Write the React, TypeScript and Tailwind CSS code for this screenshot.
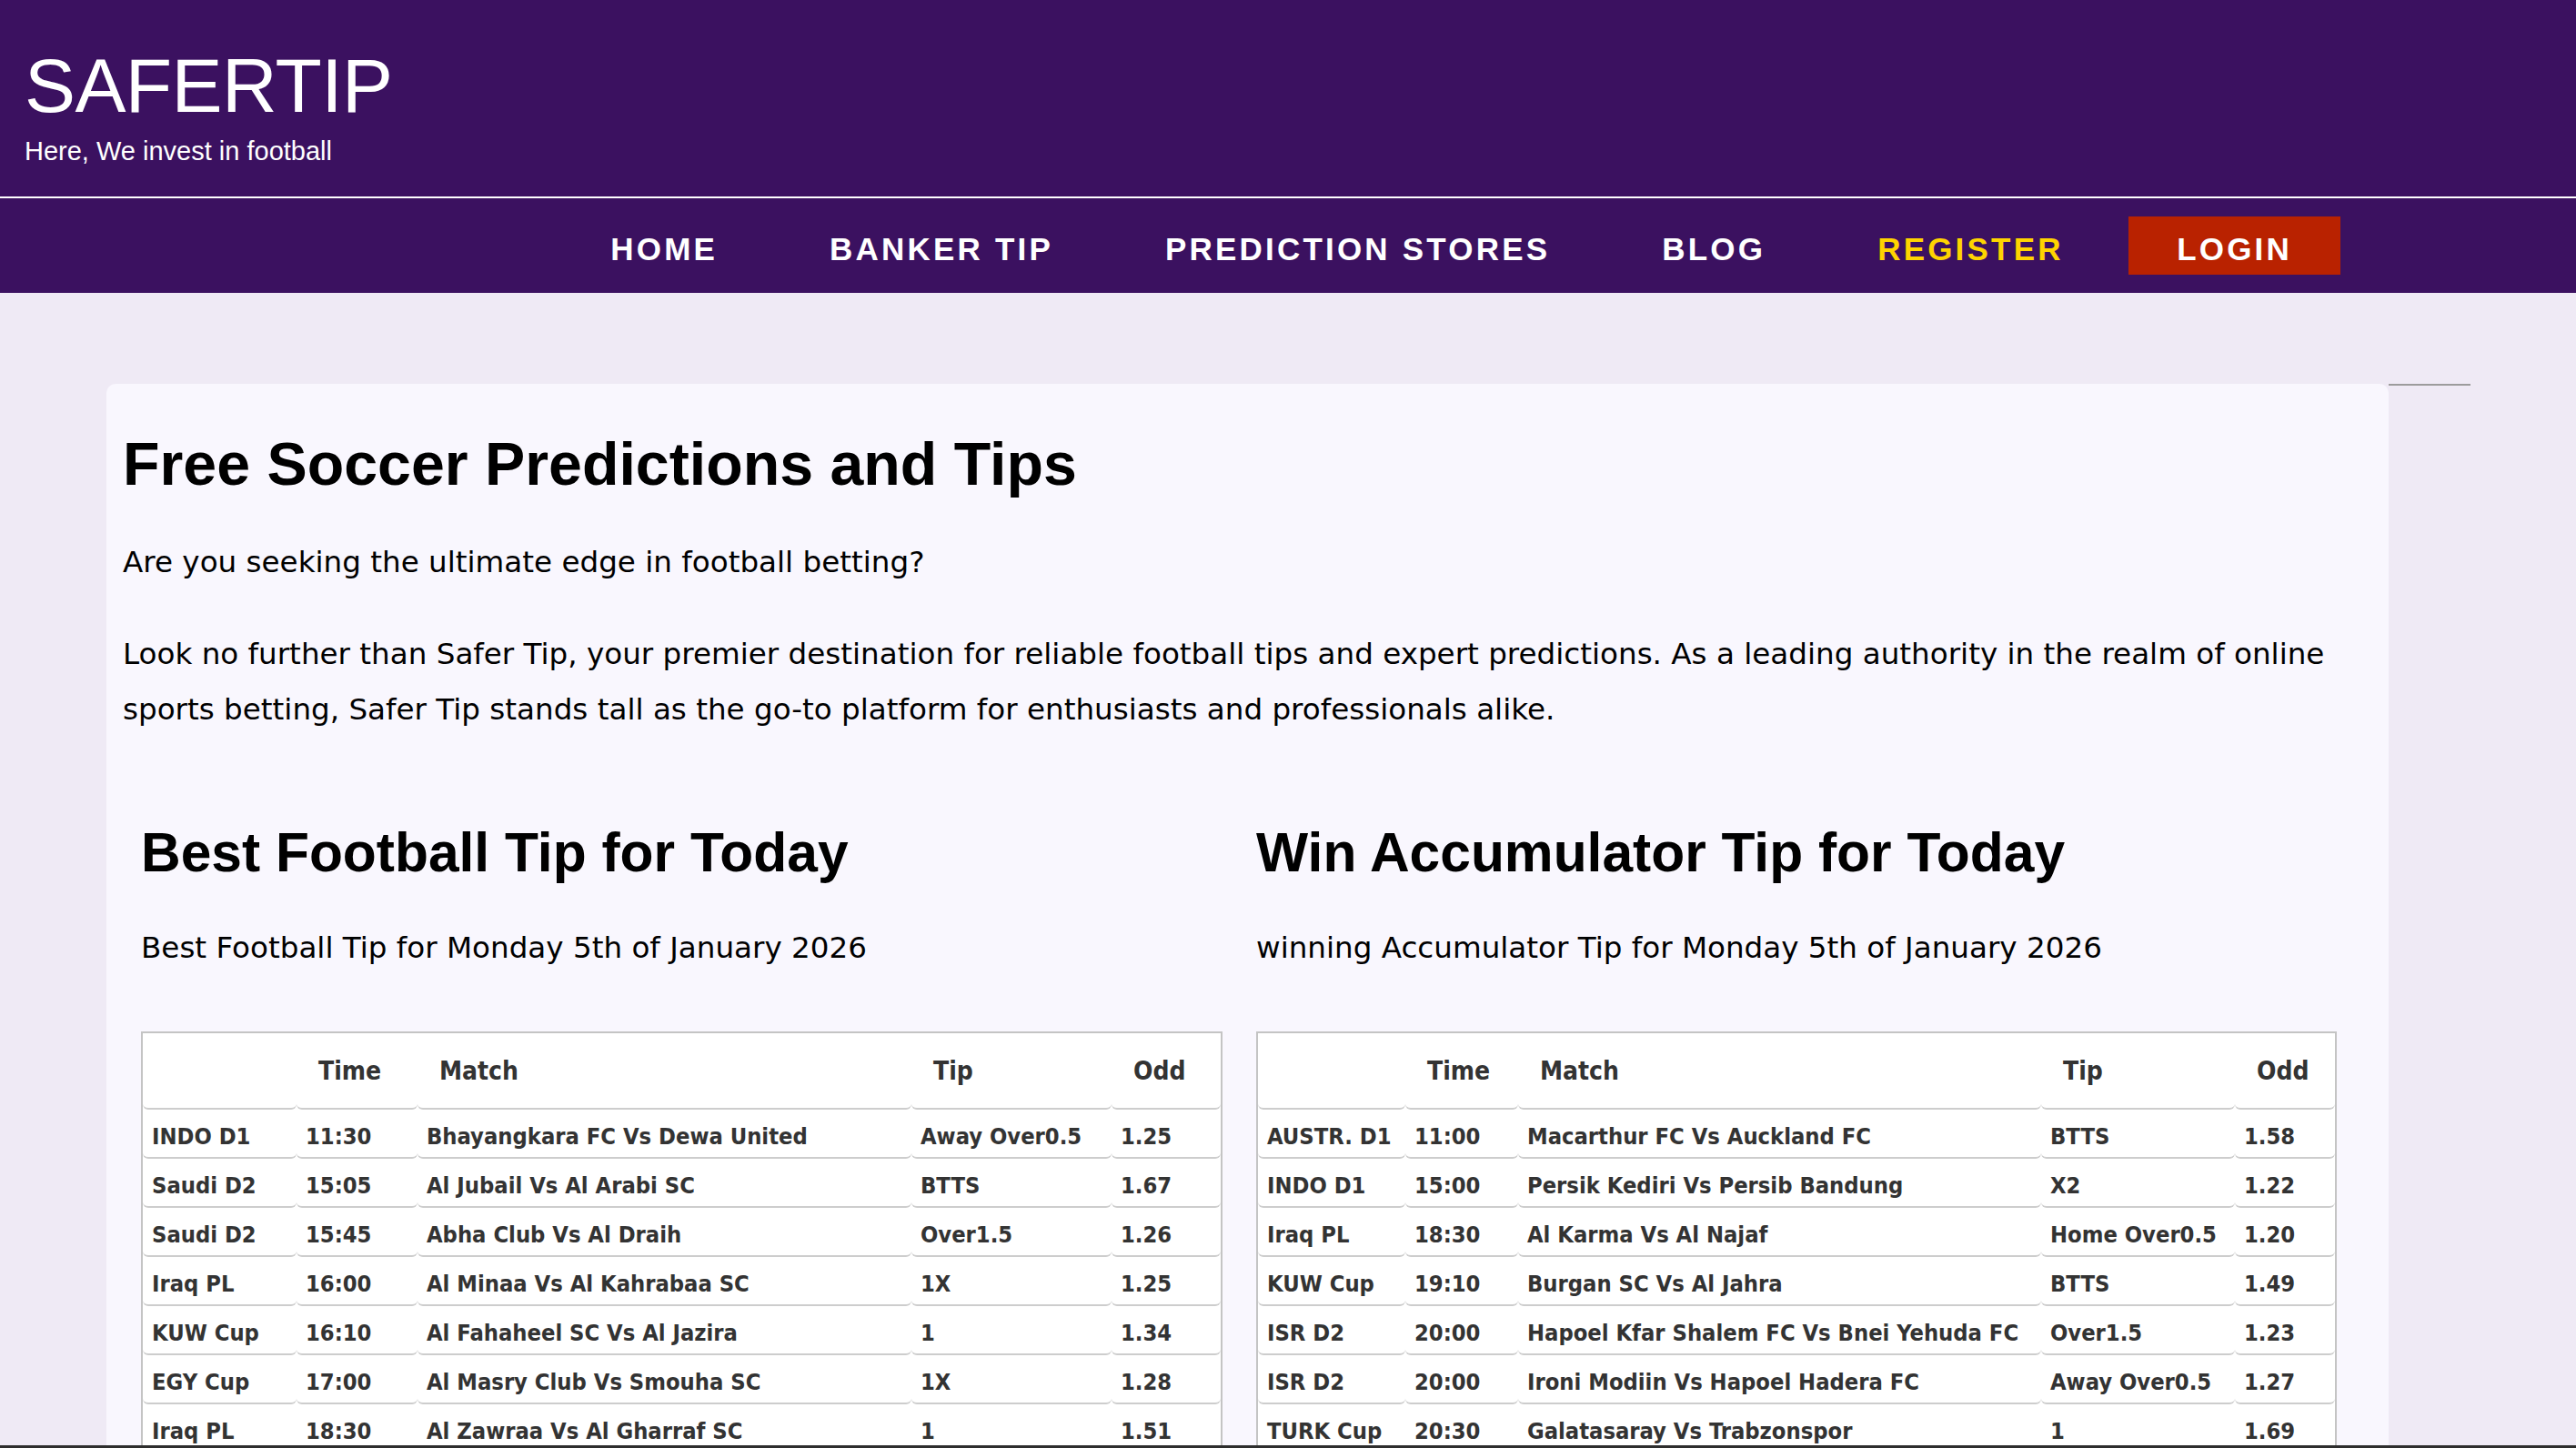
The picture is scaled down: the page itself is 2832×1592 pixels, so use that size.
import React from "react";

const ARIAL = "font-['Liberation_Sans',Arial,Helvetica,sans-serif]";
const BODY = "font-['DejaVu_Sans',Verdana,sans-serif]";
const TABLE = "font-['DejaVu_Sans_Condensed','DejaVu_Sans',sans-serif] font-stretch-condensed";

type Row = [string, string, string, string, string];

const bestTips: Row[] = [
  ["INDO D1", "11:30", "Bhayangkara FC Vs Dewa United", "Away Over0.5", "1.25"],
  ["Saudi D2", "15:05", "Al Jubail Vs Al Arabi SC", "BTTS", "1.67"],
  ["Saudi D2", "15:45", "Abha Club Vs Al Draih", "Over1.5", "1.26"],
  ["Iraq PL", "16:00", "Al Minaa Vs Al Kahrabaa SC", "1X", "1.25"],
  ["KUW Cup", "16:10", "Al Fahaheel SC Vs Al Jazira", "1", "1.34"],
  ["EGY Cup", "17:00", "Al Masry Club Vs Smouha SC", "1X", "1.28"],
  ["Iraq PL", "18:30", "Al Zawraa Vs Al Gharraf SC", "1", "1.51"],
];

const accaTips: Row[] = [
  ["AUSTR. D1", "11:00", "Macarthur FC Vs Auckland FC", "BTTS", "1.58"],
  ["INDO D1", "15:00", "Persik Kediri Vs Persib Bandung", "X2", "1.22"],
  ["Iraq PL", "18:30", "Al Karma Vs Al Najaf", "Home Over0.5", "1.20"],
  ["KUW Cup", "19:10", "Burgan SC Vs Al Jahra", "BTTS", "1.49"],
  ["ISR D2", "20:00", "Hapoel Kfar Shalem FC Vs Bnei Yehuda FC", "Over1.5", "1.23"],
  ["ISR D2", "20:00", "Ironi Modiin Vs Hapoel Hadera FC", "Away Over0.5", "1.27"],
  ["TURK Cup", "20:30", "Galatasaray Vs Trabzonspor", "1", "1.69"],
];

const navLinks = ["HOME", "BANKER TIP", "PREDICTION STORES", "BLOG"];

export default function App() {
  return (
    <div className="min-h-screen bg-[#efeaf5]">
      {/* Brand */}
      <header className="bg-[#3b1160]">
        <div className="h-[216px] pl-[27px] pt-[52px] text-white">
          <div className={`${ARIAL} text-[84px] leading-[84px] tracking-[-0.6px]`}>SAFERTIP</div>
          <div className={`${ARIAL} mt-[16px] text-[29px] leading-[29px]`}>Here, We invest in football</div>
        </div>
        <div className="h-[2px] bg-white" />
        <nav className={`${ARIAL} flex h-[104px] items-center justify-end pr-[259px] text-[35px] font-bold tracking-[3.2px]`}>
          {navLinks.map((l) => (
            <a key={l} className="px-[61.5px] pt-[9px] text-white">
              {l}
            </a>
          ))}
          <a className="px-[61.5px] pt-[9px] text-[#ffd400]">REGISTER</a>
          <a className="ml-[10px] flex h-[64px] items-center bg-[#b92200] px-[53px] pt-[9px] text-white">LOGIN</a>
        </nav>
      </header>

      {/* Content */}
      <div className="flex pl-[117px] pt-[100px]">
        <main className="w-[2509px] rounded-t-[10px] bg-[#f9f7fe] pb-[80px] pl-[18px] pt-[51px]">
          <h1 className={`${ARIAL} text-[66.3px] font-bold leading-[75px] text-black`}>
            Free Soccer Predictions and Tips
          </h1>
          <p className={`${BODY} mt-[39.5px] text-[32.6px] leading-[61px] text-black`}>
            Are you seeking the ultimate edge in football betting?
          </p>
          <p className={`${BODY} mt-[40px] max-w-[2480px] text-[32.6px] leading-[61px] text-black`}>
            Look no further than Safer Tip, your premier destination for reliable football tips and expert
            predictions. As a leading authority in the realm of online sports betting, Safer Tip stands tall as
            the go-to platform for enthusiasts and professionals alike.
          </p>

          <div className="mt-[91.5px] grid grid-cols-[1185px_1185px] gap-[41px] pl-[20px]">
            <TipColumn
              title="Best Football Tip for Today"
              subtitle="Best Football Tip for Monday 5th of January 2026"
              cols={[169, 133, 543, 220, 120]}
              rows={bestTips}
            />
            <TipColumn
              title="Win Accumulator Tip for Today"
              subtitle="winning Accumulator Tip for Monday 5th of January 2026"
              cols={[162, 124, 575, 213, 110]}
              rows={accaTips}
            />
          </div>
        </main>
        <aside className="w-[90px] border-t-2 border-[#9c9c9c]" />
      </div>

      <div className="fixed bottom-0 left-0 h-[3px] w-full bg-[#2e2e2e]" />
    </div>
  );
}

function TipColumn({
  title,
  subtitle,
  cols,
  rows,
}: {
  title: string;
  subtitle: string;
  cols: number[];
  rows: Row[];
}) {
  return (
    <section>
      <h2 className={`${ARIAL} text-[60.5px] font-bold leading-[70px] text-black`}>{title}</h2>
      <p className={`${BODY} mt-[50px] text-[32.6px] leading-[40px] text-black`}>{subtitle}</p>

      <table className={`${TABLE} mt-[72px] w-full table-fixed border-separate border-spacing-0 border-2 border-[#c4c4c4] bg-white text-[#333]`}>
        <colgroup>
          {cols.map((w, i) => (
            <col key={i} style={{ width: w }} />
          ))}
        </colgroup>
        <thead>
          <tr className="h-[84px]">
            {["", "Time", "Match", "Tip", "Odd"].map((h, i) => (
              <th
                key={i}
                className="rounded-b-[6px] border-b-2 border-[#cdcdcd] pl-[24px] pt-[1px] text-left text-[28px] font-bold"
              >
                {h}
              </th>
            ))}
          </tr>
        </thead>
        <tbody>
          {rows.map((r, ri) => (
            <tr key={ri} className="h-[54px]">
              {r.map((c, ci) => (
                <td
                  key={ci}
                  className="whitespace-nowrap rounded-b-[6px] border-b-2 border-[#cdcdcd] pl-[10px] pt-[7px] text-[25.3px] font-bold"
                >
                  {c}
                </td>
              ))}
            </tr>
          ))}
        </tbody>
      </table>
    </section>
  );
}
